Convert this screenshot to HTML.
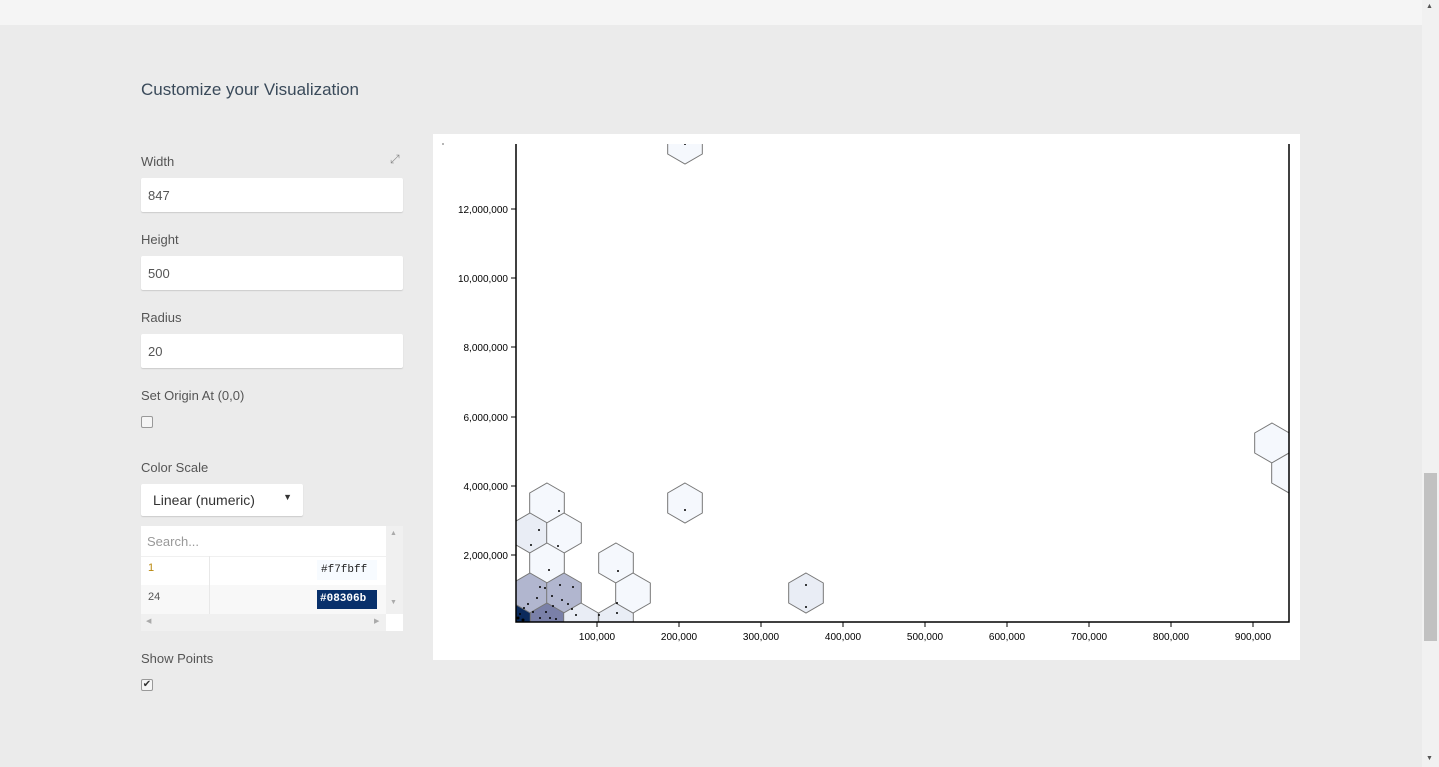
<!DOCTYPE html>
<html><head><meta charset="utf-8"><style>
*{box-sizing:border-box;margin:0;padding:0}
body{width:1439px;height:767px;overflow:hidden;background:#ebebeb;font-family:"Liberation Sans",sans-serif;position:relative;color:#444}
.top{position:absolute;left:0;top:0;width:1422px;height:25px;background:#f5f5f5}
.sb{position:absolute;left:1422px;top:0;width:17px;height:767px;background:#f1f1f1}
.thumb{position:absolute;left:1424px;top:473px;width:13px;height:168px;background:#c1c1c1}
.t{position:absolute;font-size:13px;color:#555}
h2{position:absolute;left:141px;top:80px;font-size:17px;font-weight:normal;color:#3a4a5a}
.in{position:absolute;left:141px;width:262px;height:34px;background:#fff;border-radius:2px;box-shadow:0 1px 1px #ccc;font-size:13px;padding:10px 7px;color:#555}
.cb{position:absolute;left:141px;width:12px;height:12px;border:1px solid #999;border-radius:2px;background:#f5f5f5;font-size:10px;line-height:10px;text-align:center}
</style></head><body>
<div class="top"></div>
<div class="sb"></div><div class="thumb"></div>
<div style="position:absolute;left:1426px;top:3px;font-size:7px;color:#555">▲</div>
<div style="position:absolute;left:1426px;top:755px;font-size:7px;color:#555">▼</div>
<h2>Customize your Visualization</h2>
<div class="t" style="left:141px;top:154px">Width</div>
<div style="position:absolute;left:390px;top:152px;font-size:12px;color:#888">⤢</div>
<div class="in" style="top:178px">847</div>
<div class="t" style="left:141px;top:232px">Height</div>
<div class="in" style="top:256px">500</div>
<div class="t" style="left:141px;top:310px">Radius</div>
<div class="in" style="top:334px">20</div>
<div class="t" style="left:141px;top:388px">Set Origin At (0,0)</div>
<div class="cb" style="top:416px"></div>
<div class="t" style="left:141px;top:460px">Color Scale</div>
<div class="in" style="top:484px;width:162px;height:32px;padding:8px 12px;font-size:14px;color:#333">Linear (numeric)<span style="position:absolute;right:11px;top:8px;font-size:9px">▼</span></div>
<div style="position:absolute;left:141px;top:526px;width:262px;height:105px;background:#fff">
 <div style="position:absolute;left:0;top:0;width:245px;height:30px;padding:8px 6px;font-size:13px;color:#999">Search...</div>
 <div style="position:absolute;left:0;top:30px;width:245px;height:29px;border-top:1px solid #f0f0f0"></div>
 <div style="position:absolute;left:0;top:59px;width:245px;height:29px;background:#f8f8f8"></div>
 <div style="position:absolute;left:68px;top:30px;width:1px;height:58px;background:#e8e8e8"></div>
 <div style="position:absolute;left:7px;top:36px;font-size:11px;color:#b8860b">1</div>
 <div style="position:absolute;left:7px;top:65px;font-size:11px;color:#555">24</div>
 <div style="position:absolute;left:176px;top:34px;width:60px;height:20px;background:#f7fbff;font:11px 'Liberation Mono',monospace;padding:4px 4px;color:#222">#f7fbff</div>
 <div style="position:absolute;left:176px;top:64px;width:60px;height:19px;background:#08306b;font:bold 11px 'Liberation Mono',monospace;padding:3px 3px;color:#fff">#08306b</div>
 <div style="position:absolute;left:0;top:88px;width:245px;height:17px;background:#f0f0f0"></div>
 <div style="position:absolute;left:245px;top:0;width:17px;height:88px;background:#f0f0f0"></div>
 <div style="position:absolute;left:249px;top:4px;font-size:7px;color:#aaa">▲</div>
 <div style="position:absolute;left:249px;top:73px;font-size:7px;color:#aaa">▼</div>
 <div style="position:absolute;left:5px;top:91px;font-size:7px;color:#aaa">◀</div>
 <div style="position:absolute;left:233px;top:91px;font-size:7px;color:#aaa">▶</div>
</div>
<div class="t" style="left:141px;top:651px">Show Points</div>
<div class="cb" style="top:679px;color:#333">✔</div>

<svg style="position:absolute;left:433px;top:134px" width="867" height="526" viewBox="433 134 867 526">
<rect x="433" y="134" width="867" height="526" fill="#fff"/>
<defs><clipPath id="c"><rect x="516" y="144" width="773" height="478"/></clipPath>
<path id="h" d="M0,-20L17.32,-10L17.32,10L0,20L-17.32,10L-17.32,-10Z" stroke="#777" stroke-width="1"/></defs>
<g clip-path="url(#c)">
<use href="#h" x="685" y="144" fill="#f5f8fd"/>
<use href="#h" x="547" y="503" fill="#f5f8fd"/>
<use href="#h" x="530" y="533" fill="#e9edf5"/>
<use href="#h" x="564" y="533" fill="#f5f8fd"/>
<use href="#h" x="547" y="563" fill="#f5f8fd"/>
<use href="#h" x="530" y="593" fill="#b1b6cf"/>
<use href="#h" x="564" y="593" fill="#b1b6cf"/>
<use href="#h" x="547" y="623" fill="#7a80a8"/>
<use href="#h" x="513" y="623" fill="#0b2a5c"/>
<use href="#h" x="581" y="623" fill="#e9edf5"/>
<use href="#h" x="616" y="623" fill="#e9edf5"/>
<use href="#h" x="616" y="563" fill="#f5f8fd"/>
<use href="#h" x="633" y="593" fill="#f5f8fd"/>
<use href="#h" x="685" y="503" fill="#f5f8fd"/>
<use href="#h" x="806" y="593" fill="#e9edf5"/>
<use href="#h" x="1272" y="443" fill="#f5f8fd"/>
<use href="#h" x="1289" y="473" fill="#f5f8fd"/>
<g fill="#000">
<circle cx="685" cy="144" r="1"/><circle cx="559" cy="511" r="1"/><circle cx="539" cy="530" r="1"/><circle cx="531" cy="545" r="1"/><circle cx="558" cy="546" r="1"/><circle cx="549" cy="570" r="1"/><circle cx="685" cy="510" r="1"/><circle cx="618" cy="571" r="1"/><circle cx="806" cy="585" r="1"/><circle cx="806" cy="607" r="1"/><circle cx="617" cy="603" r="1"/><circle cx="617" cy="613" r="1"/><circle cx="599" cy="615" r="1"/>
<circle cx="540" cy="587" r="1"/><circle cx="537" cy="598" r="1"/><circle cx="545" cy="588" r="1"/><circle cx="552" cy="596" r="1"/><circle cx="560" cy="585" r="1"/><circle cx="573" cy="587" r="1"/><circle cx="562" cy="600" r="1"/><circle cx="553" cy="606" r="1"/><circle cx="546" cy="612" r="1"/><circle cx="528" cy="604" r="1"/><circle cx="524" cy="608" r="1"/><circle cx="533" cy="612" r="1"/><circle cx="540" cy="618" r="1"/><circle cx="550" cy="618" r="1"/><circle cx="556" cy="619" r="1"/><circle cx="568" cy="604" r="1"/><circle cx="572" cy="609" r="1"/><circle cx="576" cy="615" r="1"/><circle cx="520" cy="614" r="1"/><circle cx="518" cy="618" r="1.5"/><circle cx="523" cy="620" r="1.5"/>
</g></g>
<path d="M516,144V622H1289V144" fill="none" stroke="#000" stroke-width="1.5"/>
<g stroke="#000"><path d="M511,209h5M511,278h5M511,347h5M511,417h5M511,486h5M511,555h5M597,622v5M679,622v5M761,622v5M843,622v5M925,622v5M1007,622v5M1089,622v5M1171,622v5M1253,622v5"/></g>
<g font-family="Liberation Sans" font-size="10" fill="#000" text-anchor="end">
<text x="508" y="213">12,000,000</text><text x="508" y="282">10,000,000</text><text x="508" y="351">8,000,000</text><text x="508" y="421">6,000,000</text><text x="508" y="490">4,000,000</text><text x="508" y="559">2,000,000</text></g>
<g font-family="Liberation Sans" font-size="10" fill="#000" text-anchor="middle">
<text x="597" y="640">100,000</text><text x="679" y="640">200,000</text><text x="761" y="640">300,000</text><text x="843" y="640">400,000</text><text x="925" y="640">500,000</text><text x="1007" y="640">600,000</text><text x="1089" y="640">700,000</text><text x="1171" y="640">800,000</text><text x="1253" y="640">900,000</text></g>
<circle cx="443" cy="144" r="0.6" fill="#000"/>
</svg>
</body></html>
